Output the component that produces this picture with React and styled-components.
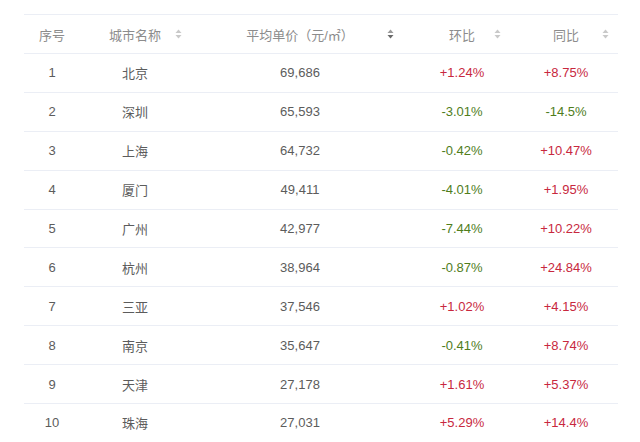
import React from 'react'
import styled, { createGlobalStyle } from 'styled-components'

const GlobalStyle = createGlobalStyle`
  body {
    margin: 0;
    background: #fff;
    font-family: "Liberation Sans", "Noto Sans CJK SC", Arial, sans-serif;
  }
`

const Page = styled.div`
  padding: 14px 22px 0 24px;
`

const Table = styled.table`
  width: 594px;
  border-collapse: collapse;
  table-layout: fixed;
  font-size: 13px;
  border-top: 1px solid #ebeef5;
`

const Th = styled.th`
  position: relative;
  height: 38px;
  padding: 0;
  font-weight: normal;
  color: #8c8c8c;
  text-align: center;
  border-bottom: 1px solid #ebeef5;
`

const Td = styled.td`
  height: 37.9px;
  padding: 0;
  text-align: center;
  color: ${p => p.$tone === 'up' ? '#c8283e' : p.$tone === 'down' ? '#4f7d1c' : '#5c5c5c'};
  border-bottom: 1px solid #ebeef5;
`

const SortIcon = styled.svg`
  position: absolute;
  right: ${p => p.$right}px;
  top: 50%;
  margin-top: -5px;
`

const Sort = ({ active, right }) => (
  <SortIcon $right={right} width="7" height="10" viewBox="0 0 7 10">
    <path d="M3.5 0.5 L6.5 4 L0.5 4 Z" fill={active ? '#9a9a9a' : '#c9c9c9'} />
    <path d="M3.5 9.5 L6.5 6 L0.5 6 Z" fill={active ? '#6a6a6a' : '#c9c9c9'} />
  </SortIcon>
)

const rows = [
  ['北京', '69,686', '+1.24%', '+8.75%'],
  ['深圳', '65,593', '-3.01%', '-14.5%'],
  ['上海', '64,732', '-0.42%', '+10.47%'],
  ['厦门', '49,411', '-4.01%', '+1.95%'],
  ['广州', '42,977', '-7.44%', '+10.22%'],
  ['杭州', '38,964', '-0.87%', '+24.84%'],
  ['三亚', '37,546', '+1.02%', '+4.15%'],
  ['南京', '35,647', '-0.41%', '+8.74%'],
  ['天津', '27,178', '+1.61%', '+5.37%'],
  ['珠海', '27,031', '+5.29%', '+14.4%'],
]

const tone = v => (v.startsWith('+') ? 'up' : 'down')

export default function App() {
  return (
    <Page>
      <GlobalStyle />
      <Table>
        <colgroup>
          <col style={{ width: 56 }} />
          <col style={{ width: 110 }} />
          <col style={{ width: 220 }} />
          <col style={{ width: 104 }} />
          <col style={{ width: 104 }} />
        </colgroup>
        <thead>
          <tr>
            <Th>序号</Th>
            <Th>城市名称<Sort right={8} /></Th>
            <Th>平均单价（元/㎡）<Sort active right={16} /></Th>
            <Th>环比<Sort right={13} /></Th>
            <Th>同比<Sort right={9} /></Th>
          </tr>
        </thead>
        <tbody>
          {rows.map((r, i) => (
            <tr key={r[0]}>
              <Td>{i + 1}</Td>
              <Td>{r[0]}</Td>
              <Td>{r[1]}</Td>
              <Td $tone={tone(r[2])}>{r[2]}</Td>
              <Td $tone={tone(r[3])}>{r[3]}</Td>
            </tr>
          ))}
        </tbody>
      </Table>
    </Page>
  )
}
